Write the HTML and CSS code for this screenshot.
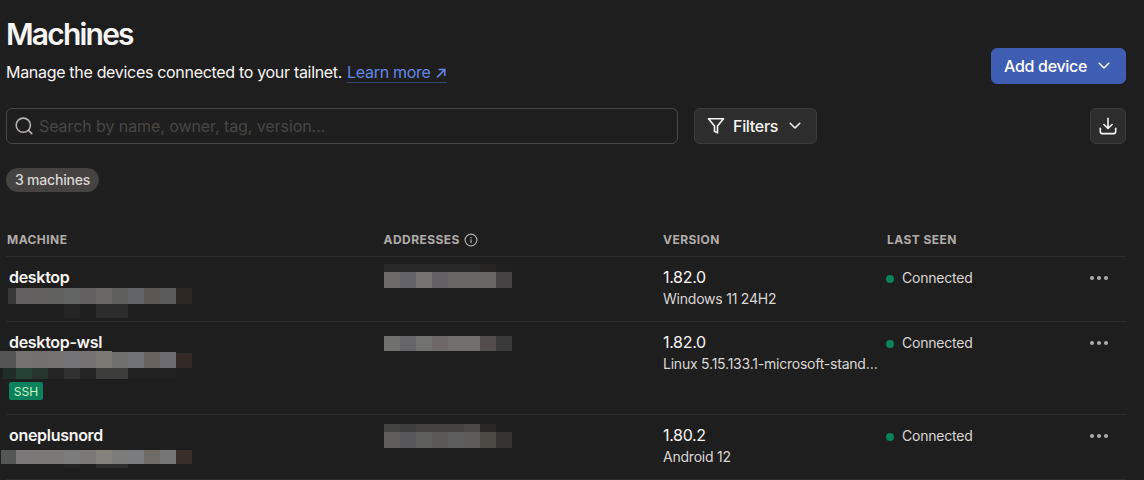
FILE: index.html
```html
<!DOCTYPE html>
<html lang="en">
<head>
<meta charset="utf-8">
<title>Machines</title>
<link rel="stylesheet" href="styles.css">
</head>
<body>
<main class="page">
  <header class="head">
    <div class="intro">
      <h1 class="title">Machines</h1>
      <p class="lead"><span class="lead-text">Manage the devices connected to your tailnet.</span> <a class="link" href="#"><span>Learn more</span><svg width="12" height="12" viewBox="0 0 12 12" fill="none" stroke="currentColor" stroke-width="1.5"><path d="M2 10.400 9.800 2.600M3.500 2.600h6.300v6.300"/></svg></a></p>
    </div>
    <button class="btn primary"><span class="add-label">Add device</span><svg width="12" height="8" viewBox="0 0 12 8" fill="none" stroke="currentColor" stroke-width="1.5" stroke-linecap="round" stroke-linejoin="round"><path d="M1.200 1.200 6 6l4.800-4.800"/></svg></button>
  </header>
  <div class="toolbar">
    <label class="search">
      <svg width="20" height="20" viewBox="0 0 20 20" fill="none" stroke="currentColor" stroke-width="1.600" stroke-linecap="round"><circle cx="8.300" cy="9.200" r="7.100"/><path d="m13.600 14.400 3.200 3.200"/></svg>
      <input class="field" type="text" placeholder="Search by name, owner, tag, version…">
    </label>
    <button class="btn filters"><svg width="18" height="18" viewBox="0 0 18 18" fill="none" stroke="currentColor" stroke-width="1.600" stroke-linejoin="round"><path d="M1.500 1.800h15l-6 7.100v7l-3-1.500V8.900z"/></svg><span class="filter-label">Filters</span><svg width="12" height="8" viewBox="0 0 12 8" fill="none" stroke="currentColor" stroke-width="1.500" stroke-linecap="round" stroke-linejoin="round"><path d="M1.200 1.200 6 6l4.800-4.800"/></svg></button>
    <button class="btn download" aria-label="Download"><svg width="18" height="18" viewBox="0 0 18 18" fill="none" stroke="currentColor" stroke-width="1.600" stroke-linecap="round" stroke-linejoin="round"><path d="M9 1.300v10M4.900 7.500 9 11.500l4.100-4M1.300 11.300v3.300a2 2 0 0 0 2 2h11.400a2 2 0 0 0 2-2v-3.300"/></svg></button>
  </div>
  <div class="count">3 machines</div>
  <section class="table">
    <div class="row columns">
      <div>Machine</div>
      <div class="with-icon"><span>Addresses</span><svg width="14" height="14" viewBox="0 0 14 14" fill="none" stroke="currentColor" stroke-width="1.200"><circle cx="7" cy="7" r="5.900"/><path d="M7 6.300v3.700M7 4v1.200"/></svg></div>
      <div>Version</div>
      <div>Last seen</div>
      <div></div>
    </div>
    <div class="row">
      <div class="machine"><div class="name">desktop</div>
        <svg class="mask owner" width="192" height="30" shape-rendering="crispEdges"><path fill="#383838" d="M8 0h8v16H8z"/><path fill="#646061" d="M16 0h16v16H16z"/><path fill="#62605d" d="M32 0h16v16H32z"/><path fill="#60615d" d="M48 0h16v16H48z"/><path fill="#636464" d="M64 0h16v16H64z"/><path fill="#645f60" d="M80 0h16v16H80z"/><path fill="#6a6864" d="M96 0h16v16H96z"/><path fill="#5f5f5e" d="M112 0h16v16h-16z"/><path fill="#616368" d="M128 0h16v16h-16z"/><path fill="#5b5652" d="M144 0h16v16h-16z"/><path fill="#5b5b5b" d="M160 0h16v16h-16z"/><path fill="#2e2822" d="M176 0h16v16h-16z"/><path fill="#252525" d="M64 16h16v14H64z"/><path fill="#2c2c2c" d="M96 16h32v14H96z"/></svg>
      </div>
      <div class="address">
        <svg class="mask ip" width="128" height="24" shape-rendering="crispEdges"><path fill="#292929" d="M0 0h96v8H0z"/><path fill="#252423" d="M96 0h16v8H96z"/><path fill="#202020" d="M112 0h16v8h-16z"/><path fill="#6c6b69" d="M0 8h16v16H0z"/><path fill="#636268" d="M16 8h16v16H16z"/><path fill="#757470" d="M32 8h16v16H32z"/><path fill="#636163" d="M48 8h16v16H48z"/><path fill="#676664" d="M64 8h48v16H64z"/><path fill="#454344" d="M112 8h16v16h-16z"/></svg>
      </div>
      <div class="version"><div class="number">1.82.0</div><div class="os">Windows 11 24H2</div></div>
      <div class="seen"><i class="dot"></i><span>Connected</span></div>
      <div class="menu"><i></i><i></i><i></i></div>
    </div>
    <div class="row tagged">
      <div class="machine"><div class="name">desktop-wsl</div>
        <svg class="mask owner raised" width="192" height="28" shape-rendering="crispEdges"><path fill="#535453" d="M0 0h16v17H0z"/><path fill="#747270" d="M16 0h16v17H16z"/><path fill="#72716e" d="M32 0h16v17H32z"/><path fill="#737270" d="M48 0h16v17H48z"/><path fill="#747376" d="M64 0h16v17H64z"/><path fill="#757172" d="M80 0h16v17H80z"/><path fill="#7b7974" d="M96 0h16v17H96z"/><path fill="#70706d" d="M112 1h16v16h-16z"/><path fill="#717277" d="M128 1h16v16h-16z"/><path fill="#67625d" d="M144 1h16v16h-16z"/><path fill="#6c6c6e" d="M160 1h16v16h-16z"/><path fill="#342a25" d="M176 2h16v15h-16z"/><path fill="#202c27" d="M3 17h13v11H3z"/><path fill="#244235" d="M16 17h16v11H16z"/><path fill="#26352e" d="M32 17h16v11H32z"/><path fill="#242424" d="M48 17h16v11H48zM80 17h16v11H80z"/><path fill="#303030" d="M64 17h16v11H64z"/><path fill="#3c3c3a" d="M96 17h32v11H96z"/><path fill="#212121" d="M128 17h48v11h-48z"/></svg>
        <span class="tag">SSH</span>
      </div>
      <div class="address">
        <svg class="mask ip lower" width="128" height="15" shape-rendering="crispEdges"><path fill="#70706e" d="M0 0h16v15H0z"/><path fill="#66666a" d="M16 0h16v15H16z"/><path fill="#72726f" d="M32 0h16v15H32z"/><path fill="#6d6866" d="M48 0h16v15H48z"/><path fill="#706f6d" d="M64 0h32v15H64z"/><path fill="#534e4d" d="M96 0h16v15H96z"/><path fill="#3a3a3a" d="M112 0h16v15h-16z"/></svg>
      </div>
      <div class="version"><div class="number">1.82.0</div><div class="os">Linux 5.15.133.1-microsoft-stand…</div></div>
      <div class="seen"><i class="dot"></i><span>Connected</span></div>
      <div class="menu"><i></i><i></i><i></i></div>
    </div>
    <div class="row">
      <div class="machine"><div class="name">oneplusnord</div>
        <svg class="mask owner dropped" width="192" height="18" shape-rendering="crispEdges"><path fill="#545656" d="M1 0h15v14H1z"/><path fill="#7c7879" d="M16 0h16v14H16z"/><path fill="#7b7876" d="M32 0h16v14H32z"/><path fill="#7a7977" d="M48 0h16v14H48z"/><path fill="#7c7b7c" d="M64 0h16v14H64z"/><path fill="#7c7878" d="M80 0h16v14H80z"/><path fill="#84827b" d="M96 0h16v14H96z"/><path fill="#7b7b7a" d="M112 0h16v14h-16z"/><path fill="#7a7b7e" d="M128 0h16v14h-16z"/><path fill="#706b65" d="M144 0h16v14h-16z"/><path fill="#757575" d="M160 0h16v14h-16z"/><path fill="#392e28" d="M176 0h16v14h-16z"/><path fill="#242424" d="M64 14h16v4H64z"/><path fill="#2c2c2c" d="M96 14h32v4H96z"/></svg>
      </div>
      <div class="address">
        <svg class="mask ip third" width="128" height="24" shape-rendering="crispEdges"><path fill="#444443" d="M0 0h16v8H0z"/><path fill="#3e3e3e" d="M16 0h16v8H16z"/><path fill="#444342" d="M32 0h48v8H32z"/><path fill="#494846" d="M80 0h16v8H80z"/><path fill="#292827" d="M96 0h16v8H96z"/><path fill="#5f5e5c" d="M0 8h16v16H0z"/><path fill="#57565a" d="M16 8h16v16H16z"/><path fill="#5f5f5b" d="M32 8h16v16H32z"/><path fill="#5c5856" d="M48 8h16v16H48z"/><path fill="#5d5d5e" d="M64 8h16v16H64z"/><path fill="#5d5c58" d="M80 8h16v16H80z"/><path fill="#4d4944" d="M96 8h16v16H96z"/><path fill="#353432" d="M112 8h16v16h-16z"/></svg>
      </div>
      <div class="version"><div class="number">1.80.2</div><div class="os">Android 12</div></div>
      <div class="seen"><i class="dot"></i><span>Connected</span></div>
      <div class="menu"><i></i><i></i><i></i></div>
    </div>
  </section>
</main>
</body>
</html>
```
FILE: styles.css
```css
* { box-sizing: border-box; }
body { margin: 0; background: #1f1e1e; color: #f7f5f4; font: 16px/24px Inter, "Liberation Sans", sans-serif; overflow: hidden; }
.page { padding: 16px 18px 0 6px; }
.head { display: flex; justify-content: space-between; align-items: flex-end; height: 68px; }
.title { margin: 0; font-size: 30px; line-height: 36px; font-weight: 600; letter-spacing: -1.8px; }
.lead { display: flex; gap: 5px; margin: 8px 0 0; letter-spacing: -0.31px; }
.link { display: flex; align-items: center; gap: 4px; height: 23px; color: #6487e8; line-height: 24px; letter-spacing: -0.3px; text-decoration: none; border-bottom: 1px solid #33446f; }
.link span { padding-top: 2px; }
.link svg { margin-top: 3px; }
.btn { display: flex; align-items: center; height: 36px; padding: 0 12px; border: 1px solid #3d3c3c; border-radius: 6px; background: #2e2d2d; color: #f7f5f4; font: 500 16px/24px Inter, sans-serif; letter-spacing: -0.3px; }
.primary { width: 135px; justify-content: space-between; padding-right: 15px; border-color: #3f5db3; background: #3f5db3; color: #fff; }
.toolbar { display: flex; margin-top: 24px; }
.search { display: flex; align-items: center; gap: 4px; width: 672px; height: 36px; margin-right: 16px; padding-left: 8px; border: 1px solid #494747; border-radius: 6px; color: #b5b2b0; }
.field { flex: 1; padding: 0; border: 0; outline: 0; background: none; color: inherit; font: 16px/24px Inter, sans-serif; letter-spacing: -0.08px; }
.field::placeholder { color: #474645; opacity: 1; }
.filters { width: 123px; }
.filter-label { margin: 0 11px 0 8px; letter-spacing: -0.3px; }
.download { width: 36px; margin-left: auto; padding: 0; justify-content: center; }
.count { width: 93px; height: 24px; margin-top: 24px; border-radius: 12px; background: #444342; color: #dad6d5; font-size: 14px; font-weight: 500; letter-spacing: -0.2px; text-align: center; }
.table { margin-top: 32px; }
.row { position: relative; display: grid; grid-template-columns: 377px 280px 223px 1fr 36px; border-bottom: 1px solid #2e2d2d; padding: 8px 0; height: 65px; }
.tagged { height: 93px; }
.columns { height: 33px; padding: 8px 0 8px 1px; grid-template-columns: 376.5px 279.5px 224px 1fr 36px; color: #afacab; font-size: 12px; line-height: 16px; font-weight: 700; letter-spacing: 0.45px; text-transform: uppercase; }
.with-icon { display: flex; align-items: center; gap: 4px; }
.machine { padding-left: 3px; }
.name { font-weight: 600; letter-spacing: -0.3px; }
/* Redaction blocks lie over the cell text */
.mask { position: absolute; display: block; }
.owner { left: -6px; top: 31px; }
.raised { top: 29px; }
.dropped { top: 35px; }
.ip { left: 378px; top: 7px; }
.lower { top: 14px; }
.third { top: 9px; }
.tag { display: block; width: 34px; height: 18px; margin-top: 28px; border-radius: 2px; background: #0b825b; color: #cbf4c9; font-size: 12px; line-height: 19px; text-align: center; }
.number { line-height: 24px; letter-spacing: -0.32px; }
.os { color: #dad6d5; font-size: 14px; line-height: 20px; letter-spacing: -0.22px; white-space: nowrap; }
.seen { display: flex; align-items: center; gap: 8px; height: 26px; color: #dad6d5; font-size: 14px; letter-spacing: -0.2px; }
.dot { width: 8px; height: 8px; margin-top: 1px; border-radius: 50%; background: #0b825b; }
.menu { display: flex; align-items: center; gap: 3px; height: 26px; }
.menu i { width: 4px; height: 4px; border-radius: 50%; background: #afacab; }
```
